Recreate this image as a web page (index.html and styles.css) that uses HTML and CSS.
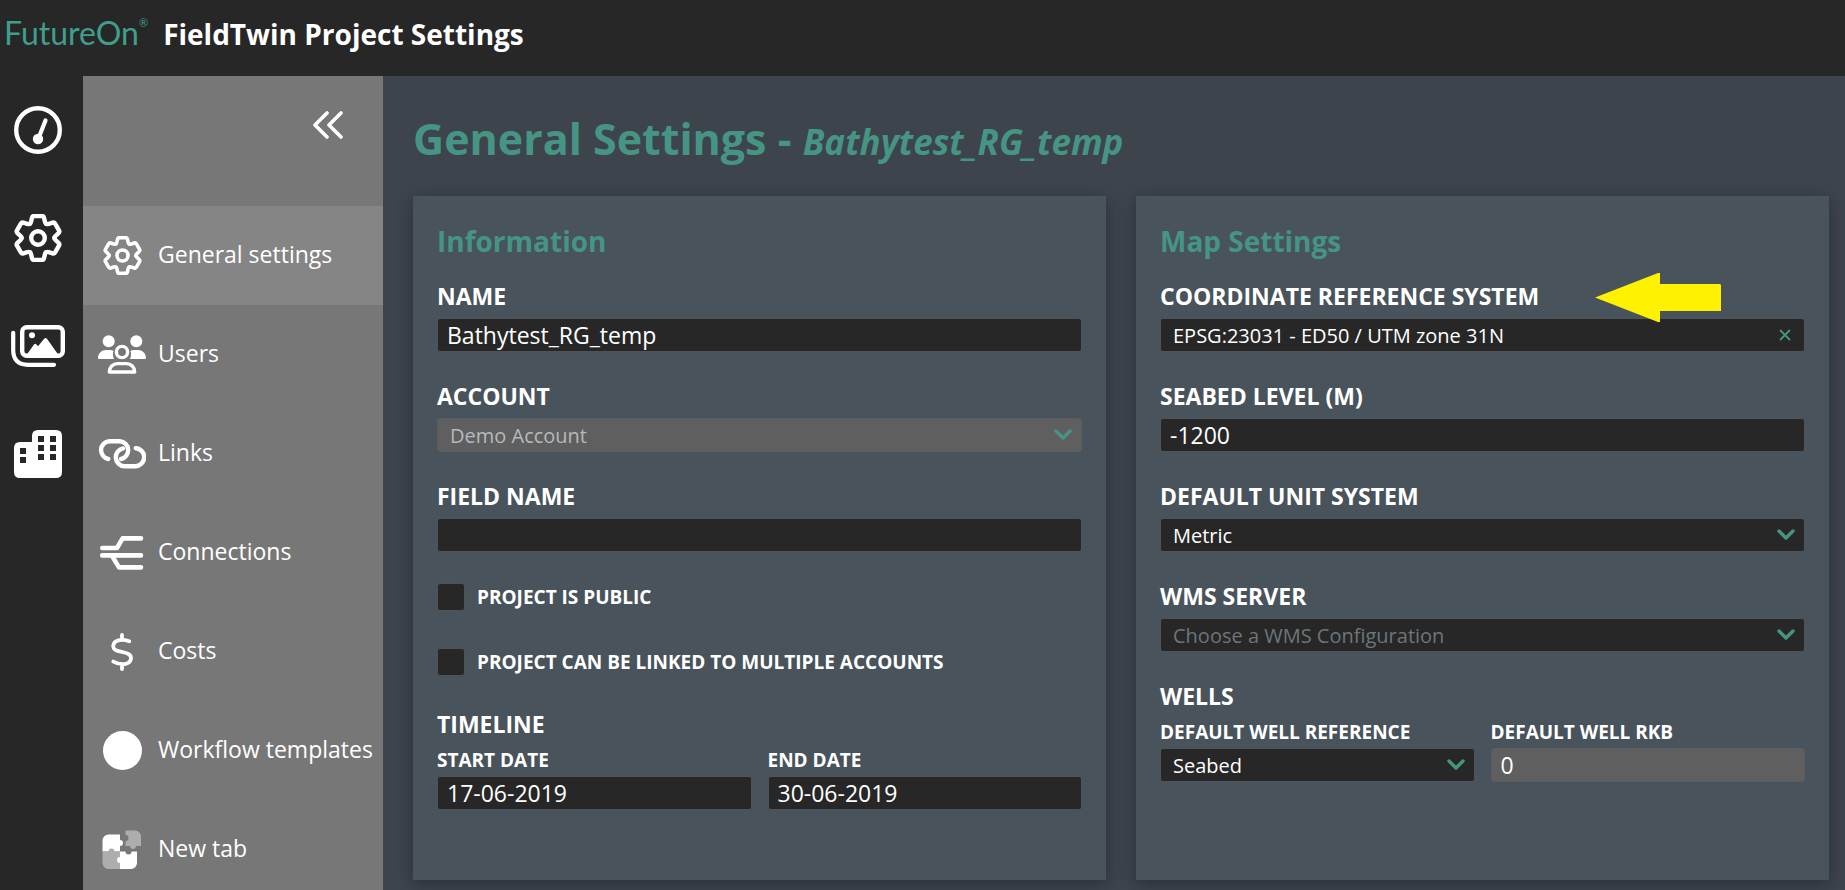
FILE: index.html
```html
<!DOCTYPE html>
<html lang="en">
<head>
<meta charset="UTF-8" />
<meta name="viewport" content="width=device-width, initial-scale=1" />
<title>FieldTwin Project Settings</title>
<link rel="stylesheet" href="styles.css">
</head>
<body>
  <svg class="sprite" aria-hidden="true">
    <defs>
      <path id="tooth" d="M-8.2 -14.2Q-7.1 -14.9 -6.9 -16.5L-6 -20.3Q-5.6 -22 -3.9 -22H3.9Q5.6 -22 6 -20.3L6.9 -16.5Q7.1 -14.9 8.2 -14.2" />
      <symbol id="gear" viewBox="-24 -24 48 48">
        <g fill="none" stroke="currentColor" stroke-width="4.4" stroke-linecap="round" stroke-linejoin="round">
          <use href="#tooth" />
          <use href="#tooth" transform="rotate(60)" />
          <use href="#tooth" transform="rotate(120)" />
          <use href="#tooth" transform="rotate(180)" />
          <use href="#tooth" transform="rotate(240)" />
          <use href="#tooth" transform="rotate(300)" />
          <circle r="6.8" />
        </g>
      </symbol>
    </defs>
  </svg>

  <header class="topbar">
    <a href="#" class="logo">FutureOn<sup>®</sup></a>
    <span class="app-title">FieldTwin Project Settings</span>
  </header>

  <div class="layout">
    <nav class="rail" aria-label="Main">
      <a href="#" aria-label="Dashboard">
        <svg width="48" height="48" viewBox="0 0 48 48">
          <circle cx="24" cy="24" r="21.8" fill="none" stroke="currentColor" stroke-width="4.4" />
          <path d="M24 33.5L31.5 14.5" stroke="currentColor" stroke-width="4.2" stroke-linecap="round" />
          <circle cx="24" cy="33" r="5.2" fill="currentColor" />
        </svg>
      </a>
      <a href="#" aria-label="Settings"><svg width="48" height="48"><use href="#gear" /></svg></a>
      <a href="#" aria-label="Images">
        <svg width="54" height="42" viewBox="0 0 54 42">
          <rect x="11.2" y="2.2" width="40.6" height="28.6" rx="4.5" fill="none" stroke="currentColor" stroke-width="4.4" />
          <path d="M2.2 7.8V25Q2.2 39.8 17 39.8H43" fill="none" stroke="currentColor" stroke-width="4.2" stroke-linecap="round" />
          <circle cx="21" cy="10.3" r="3" fill="currentColor" />
          <path d="M15.5 30L23 19.6Q24.2 18 25.5 19.4L27 21.2L33.2 13.8Q34.7 12 36 13.8L47.5 30Z" fill="currentColor" />
        </svg>
      </a>
      <a href="#" aria-label="Companies">
        <svg width="48" height="48" viewBox="0 0 48 48">
          <path fill="currentColor" fill-rule="evenodd" d="M6 12H18V6Q18 0 24 0H42Q48 0 48 6V42Q48 48 42 48H6Q0 48 0 42V18Q0 12 6 12ZM6 18V24H12V18ZM6 27V33H12V27ZM24 6V12H30V6ZM36 6V12H42V6ZM24 15V21H30V15ZM36 15V21H42V15ZM24 24V30H30V24ZM36 24V30H42V24Z" />
        </svg>
      </a>
    </nav>

    <aside class="sidebar">
      <div class="sidebar-head">
        <button type="button" class="collapse" aria-label="Collapse menu">
          <svg width="30" height="28" viewBox="0 0 30 28">
            <path d="M14 2L2 14L14 26M28 2L16 14L28 26" fill="none" stroke="currentColor" stroke-width="3.6" stroke-linecap="round" stroke-linejoin="round" />
          </svg>
        </button>
      </div>
      <nav class="menu" aria-label="Project settings">
        <a href="#" class="menu-item active">
          <span class="icon"><svg width="39" height="39"><use href="#gear" /></svg></span>
          General settings
        </a>
        <a href="#" class="menu-item">
          <span class="icon">
            <svg width="48" height="40" viewBox="0 0 48 40">
              <g fill="currentColor">
                <circle cx="10.7" cy="6.2" r="6" />
                <circle cx="38.3" cy="6.2" r="6" />
                <path d="M1 24Q0 24 0 23C0 18 4 15 8 15H12C13.5 15 14.6 15.3 15.5 15.8C14.6 19 14.9 22 16 24Z" />
                <path d="M47 24Q48 24 48 23C48 18 44 15 40 15H36C34.5 15 33.4 15.3 32.5 15.8C33.4 19 33.1 22 32 24Z" />
              </g>
              <g fill="none" stroke="currentColor" stroke-width="3.4">
                <circle cx="24" cy="17" r="5.6" />
                <path d="M11.3 37C11.3 32 15 28.6 19.5 28.6H28.5C33 28.6 36.7 32 36.7 37Z" stroke-linejoin="round" />
              </g>
            </svg>
          </span>
          Users
        </a>
        <a href="#" class="menu-item">
          <span class="icon">
            <svg width="48" height="30" viewBox="0 0 48 30">
              <g fill="none" stroke="currentColor" stroke-width="4.4" stroke-linecap="round">
                <path d="M10.3 20A9 9 0 0 1 11.3 2.2H21.8A9 9 0 0 1 23 20" />
                <path d="M37.7 9.2A9 9 0 0 1 36.7 27.2H26.2A9 9 0 0 1 25 9.4" />
              </g>
            </svg>
          </span>
          Links
        </a>
        <a href="#" class="menu-item">
          <span class="icon">
            <svg width="44" height="34" viewBox="0 0 44 34">
              <path d="M2.3 12H17L22.6 2.4H41M2.3 19.4H41M11.7 19.4L19 31.4H41" fill="none" stroke="currentColor" stroke-width="4.6" stroke-linecap="round" stroke-linejoin="round" />
            </svg>
          </span>
          Connections
        </a>
        <a href="#" class="menu-item">
          <span class="icon">
            <svg width="22" height="38" viewBox="0 0 22 38">
              <path d="M18.2 8.3C10 5.6 3.2 7 2.3 12.4C1.6 17.6 7 17.9 11.5 19C17 20.3 20.7 21.6 19.9 26C18.9 31.6 10.5 33 2.3 28.6M11 2V6.5M11 31.5V36" fill="none" stroke="currentColor" stroke-width="3.8" stroke-linecap="round" />
            </svg>
          </span>
          Costs
        </a>
        <a href="#" class="menu-item">
          <span class="icon"><svg width="39" height="39" viewBox="0 0 40 40"><circle cx="20" cy="20" r="20" fill="currentColor" /></svg></span>
          Workflow templates
        </a>
        <a href="#" class="menu-item">
          <span class="icon">
            <svg width="40" height="40" viewBox="0 0 40 40">
              <path d="M6.5 4.5H18V10A3 3 0 1 1 18 16V21.5H.5V10.5A6 6 0 0 1 6.5 4.5Z" fill="#fff" />
              <path d="M.5 21.5H6.5A3 3 0 1 1 12.5 21.5H18V39H6.5A6 6 0 0 1 .5 33Z" fill="#adadad" />
              <path d="M18 21.5H23.5A3 3 0 1 0 29.5 21.5H35V33A6 6 0 0 1 29 39H18V33A3 3 0 1 1 18 27Z" fill="#fff" />
              <path d="M23.5 .5H33A6 6 0 0 1 39 6.5V16H34A3 3 0 1 1 28 16H23.5V11A3 3 0 1 0 23.5 5Z" fill="#adadad" />
            </svg>
          </span>
          New tab
        </a>
      </nav>
    </aside>

    <main class="content">
      <h1>General Settings - <em>Bathytest_RG_temp</em></h1>

      <form class="cards">
        <section class="card">
          <h2>Information</h2>

          <div class="field">
            <label for="name">Name</label>
            <input type="text" id="name" name="name" value="Bathytest_RG_temp" />
          </div>

          <div class="field">
            <label for="account">Account</label>
            <select id="account" name="account" disabled>
              <option>Demo Account</option>
            </select>
          </div>

          <div class="field">
            <label for="field_name">Field name</label>
            <input type="text" id="field_name" name="field_name" />
          </div>

          <div class="checks">
            <label><input type="checkbox" name="is_public" /> Project is public</label>
            <label><input type="checkbox" name="multi_account" /> Project can be linked to multiple accounts</label>
          </div>

          <fieldset class="field">
            <legend>Timeline</legend>
            <div class="pair">
              <div>
                <label for="start_date">Start date</label>
                <input type="text" id="start_date" name="start_date" value="17-06-2019" />
              </div>
              <div>
                <label for="end_date">End date</label>
                <input type="text" id="end_date" name="end_date" value="30-06-2019" />
              </div>
            </div>
          </fieldset>
        </section>

        <section class="card">
          <h2>Map Settings</h2>

          <div class="field">
            <label for="crs">Coordinate reference system</label>
            <div class="clearable">
              <input type="text" id="crs" name="crs" value="EPSG:23031 - ED50 / UTM zone 31N" />
              <button type="button" aria-label="Clear">
                <svg width="12" height="12" viewBox="0 0 12 12"><path d="M1 1L11 11M11 1L1 11" stroke="currentColor" stroke-width="1.8" /></svg>
              </button>
            </div>
            <svg class="pointer" width="126" height="50" viewBox="0 0 126 50" aria-hidden="true">
              <path d="M0 24.5L63 0H65V11H125L126 12V38H65V49H63Z" fill="#fff200" />
            </svg>
          </div>

          <div class="field">
            <label for="seabed">Seabed level (m)</label>
            <input type="text" id="seabed" name="seabed" value="-1200" />
          </div>

          <div class="field">
            <label for="units">Default unit system</label>
            <select id="units" name="units">
              <option>Metric</option>
            </select>
          </div>

          <div class="field">
            <label for="wms">WMS server</label>
            <select id="wms" name="wms" class="empty">
              <option>Choose a WMS Configuration</option>
            </select>
          </div>

          <fieldset class="field">
            <legend>Wells</legend>
            <div class="pair">
              <div>
                <label for="well_ref">Default well reference</label>
                <select id="well_ref" name="well_ref">
                  <option>Seabed</option>
                </select>
              </div>
              <div>
                <label for="well_rkb">Default well RKB</label>
                <input type="text" id="well_rkb" name="well_rkb" value="0" disabled />
              </div>
            </div>
          </fieldset>
        </section>
      </form>
    </main>
  </div>
</body>
</html>
```
FILE: styles.css
```css
* {
  box-sizing: border-box;
}
body {
  margin: 0;
  height: 100vh;
  display: flex;
  flex-direction: column;
  overflow: hidden;
  background: #272727;
  color: #fff;
  font-family: "Open Sans", "Noto Sans", sans-serif;
}
a {
  color: inherit;
  text-decoration: none;
}
svg {
  display: block;
}
.sprite {
  position: absolute;
  width: 0;
  height: 0;
}

/* top bar */
.topbar {
  display: flex;
  align-items: baseline;
  flex-shrink: 0;
  gap: 15px;
  height: 76px;
  padding: 11px 4px;
}
.logo {
  display: flex;
  font-family: Lato, sans-serif;
  font-weight: 400;
  font-size: 32px;
  line-height: 44px;
  color: #3f9f8c;
}
.logo sup {
  font-size: 11px;
  line-height: 24px;
}
.app-title {
  font-size: 28px;
  font-weight: 700;
  line-height: 44px;
}

.layout {
  display: flex;
  flex: 1;
  min-height: 0;
}

/* icon rail */
.rail {
  flex: 0 0 83px;
  padding-right: 7px;
}
.rail a {
  display: flex;
  align-items: center;
  justify-content: center;
  height: 108px;
}

/* side menu */
.sidebar {
  flex: 0 0 300px;
  background: #777;
  overflow: hidden;
}
.sidebar-head {
  display: flex;
  justify-content: flex-end;
  align-items: flex-start;
  height: 130px;
  padding: 35px 40px;
}
button {
  padding: 0;
  border: none;
  background: none;
  color: inherit;
  cursor: pointer;
}
.menu-item {
  display: flex;
  align-items: center;
  gap: 12px;
  height: 99px;
  padding: 0 0 3px 15px;
  font-size: 23px;
  white-space: nowrap;
}
.menu-item.active {
  background: #858585;
}
.icon {
  display: flex;
  justify-content: center;
  flex: 0 0 48px;
  padding-top: 3px;
}

/* content */
.content {
  flex: 1;
  min-width: 0;
  padding: 33px 16px 0 30px;
  background: #3d444c;
}
h1 {
  margin: 0 0 27px;
  font-size: 43px;
  line-height: 60px;
  color: #469584;
}
h1 em {
  font-size: 35px;
  line-height: 40px;
}
.cards {
  display: grid;
  grid-template-columns: 1fr 1fr;
  gap: 30px;
}
.card {
  padding: 25px 24px 42px;
  background: #49535b;
  box-shadow: 0 4px 16px rgba(0, 0, 0, 0.3);
}
h2 {
  margin: 0 0 19px;
  font-size: 28px;
  line-height: 40px;
  color: #469584;
}
.field {
  position: relative;
  margin: 0 0 28px;
  padding: 0;
  border: none;
}
label,
legend {
  display: block;
  margin-bottom: 6px;
  padding: 0;
  font-size: 23px;
  font-weight: 700;
  line-height: 32px;
  text-transform: uppercase;
}
input[type="text"],
select {
  display: block;
  width: 100%;
  height: 34px;
  padding: 0 9px;
  border: 1px solid #505456;
  border-radius: 3px;
  background: #272727;
  color: #fff;
  font-family: inherit;
  font-size: 23px;
}
select {
  appearance: none;
  padding: 0 40px 0 12px;
  background: #272727 url("data:image/svg+xml,%3Csvg xmlns='http://www.w3.org/2000/svg' width='18' height='12' viewBox='0 0 18 12'%3E%3Cpath d='M2 2L9 9L16 2' fill='none' stroke='%23469584' stroke-width='3.4' stroke-linecap='round' stroke-linejoin='round'/%3E%3C/svg%3E") no-repeat right 9px center;
  font-size: 20px;
}
select.empty {
  color: #6d757b;
}
input:disabled,
select:disabled {
  border-color: #5a5c5d;
  background-color: #5f5f5f;
  opacity: 1;
}
select:disabled {
  color: #b5b9bd;
}
.clearable {
  display: flex;
  align-items: center;
  padding-right: 13px;
  border: 1px solid #505456;
  border-radius: 3px;
  background: #272727;
}
.clearable input[type="text"] {
  height: 32px;
  padding: 0 12px;
  border: none;
  font-size: 20px;
}
.clearable button {
  color: #469584;
}
.pointer {
  position: absolute;
  top: -7px;
  right: 84px;
}
.checks {
  display: grid;
  gap: 37px;
  padding: 3px 0 32px;
}
.checks label {
  display: flex;
  align-items: center;
  gap: 12px;
  margin: 0;
  font-size: 19px;
  line-height: 28px;
}
.checks input {
  appearance: none;
  width: 28px;
  height: 28px;
  margin: 0;
  border: 1px solid #505456;
  border-radius: 3px;
  background: #272727;
}
.pair {
  display: grid;
  grid-template-columns: 1fr 1fr;
  gap: 16px;
}
.pair label {
  margin-bottom: 2px;
  font-size: 19px;
  line-height: 28px;
}
```
